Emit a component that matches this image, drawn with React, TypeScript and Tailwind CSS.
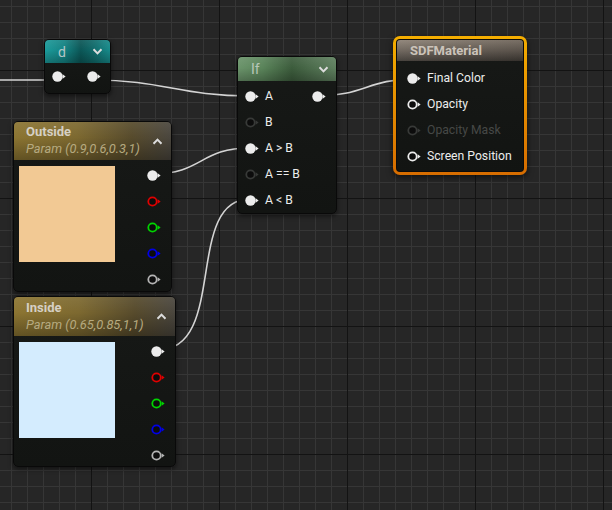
import React from 'react';

type PinKind = 'filled' | 'ring' | 'dim';

function Pin({ kind = 'filled', color = '#ececec' }: { kind?: PinKind; color?: string }) {
  const c = kind === 'dim' ? '#383a38' : color;
  return (
    <svg width="14" height="11" viewBox="0 0 14 11" className="shrink-0">
      {kind === 'filled' ? (
        <circle cx="5.5" cy="5.5" r="5.2" fill={c} />
      ) : (
        <circle cx="5.5" cy="5.5" r="4.2" fill="#0c0c0c" stroke={c} strokeWidth="1.8" />
      )}
      <polygon points="10.6,3.3 13.6,5.5 10.6,7.7" fill={c} />
    </svg>
  );
}

function Chevron({ up = false }: { up?: boolean }) {
  return (
    <svg width="11" height="7" viewBox="0 0 11 7" className="shrink-0">
      <polyline
        points={up ? '1.5,5.8 5.5,1.6 9.5,5.8' : '1.5,1.2 5.5,5.4 9.5,1.2'}
        fill="none"
        stroke="#dcdcdc"
        strokeWidth="2"
      />
    </svg>
  );
}

const font = "font-['Roboto','Liberation_Sans',sans-serif]";
const body = 'bg-[linear-gradient(180deg,#171917,#121412)]';

function Row({ pin, label, dimLabel }: { pin: PinKind; label: string; dimLabel?: boolean }) {
  return (
    <div className="flex h-[26px] items-center gap-[6px]">
      <Pin kind={pin} />
      <span className={`text-[12.2px] leading-none ${dimLabel ? 'text-[#464846]' : 'text-[#ececec]'}`}>{label}</span>
    </div>
  );
}

function ParamNode({
  title,
  param,
  swatch,
  className,
  headerH,
}: {
  title: string;
  param: string;
  swatch: string;
  className: string;
  headerH: string;
}) {
  return (
    <div
      className={`absolute flex flex-col overflow-hidden rounded-[5px] border border-[#090909] ${body} shadow-[0_2px_5px_rgba(0,0,0,0.55)] ${className}`}
    >
      <div
        className={`relative ${headerH} shrink-0 bg-[linear-gradient(90deg,#8c7532_0%,#7d6930_40%,#574b2c_75%,#4a463e_100%)]`}
      >
        <div className="absolute inset-0 bg-[linear-gradient(180deg,rgba(255,255,255,0.07)_0%,rgba(0,0,0,0)_40%,rgba(0,0,0,0.3)_100%)]" />
        <div className="relative flex h-full items-center justify-between pl-[12px] pr-[8px]">
          <div className="flex flex-col gap-[2px] pb-[2px]">
            <span className="text-[13px] font-bold leading-[15px] text-[#d6d0c4]">{title}</span>
            <span className="text-[12.8px] italic leading-[15px] text-[#b6aa80]">{param}</span>
          </div>
          <Chevron up />
        </div>
      </div>
      <div className="flex flex-1 justify-between pr-[10px]">
        <div className={`ml-[5px] mt-[6px] h-[96px] w-[96px] ${swatch}`} />
        <div className="flex flex-col pt-[2px]">
          <div className="flex h-[26px] items-center">
            <Pin kind="filled" />
          </div>
          <div className="flex h-[26px] items-center">
            <Pin kind="ring" color="#e00000" />
          </div>
          <div className="flex h-[26px] items-center">
            <Pin kind="ring" color="#00d400" />
          </div>
          <div className="flex h-[26px] items-center">
            <Pin kind="ring" color="#0000e6" />
          </div>
          <div className="flex h-[26px] items-center">
            <Pin kind="ring" color="#b4b4b4" />
          </div>
        </div>
      </div>
    </div>
  );
}

export default function App() {
  const minorX = Array.from({ length: 39 }, (_, i) => 11 + i * 16);
  const minorY = Array.from({ length: 33 }, (_, i) => 6 + i * 16);
  const majorX = [91, 219, 347, 475, 603];
  const majorY = [70, 198, 326, 454];

  return (
    <div className={`relative h-[510px] w-[612px] overflow-hidden bg-[#262626] ${font}`}>
      {/* graph grid */}
      <svg className="absolute inset-0" width="612" height="510">
        {minorX.map((x) => (
          <rect key={'x' + x} x={x} y={0} width={1} height={510} fill="#363636" />
        ))}
        {minorY.map((y) => (
          <rect key={'y' + y} x={0} y={y} width={612} height={1} fill="#363636" />
        ))}
        {majorX.map((x) => (
          <rect key={'X' + x} x={x} y={0} width={1} height={510} fill="#131313" />
        ))}
        {majorY.map((y) => (
          <rect key={'Y' + y} x={0} y={y} width={612} height={1} fill="#131313" />
        ))}
      </svg>

      {/* wires */}
      <svg className="absolute inset-0" width="612" height="510" fill="none" stroke="#d4d4d4" strokeWidth="1.6">
        <path d="M0 80 L58 80" />
        <path d="M93 80 C163 80 180 96 250 96" />
        <path d="M318 96 C362 96 370 79 413 79" />
        <path d="M153 174 C202 174 200 148 250 148" />
        <path d="M158 350 C228 350 184 199 250 199" />
      </svg>

      {/* d */}
      <div
        className={`absolute left-[44px] top-[39px] flex h-[55px] w-[67px] flex-col overflow-hidden rounded-[5px] border border-[#090909] ${body} shadow-[0_2px_5px_rgba(0,0,0,0.55)]`}
      >
        <div className="relative h-[23px] shrink-0 bg-[linear-gradient(90deg,#1c9a9a_0%,#148282_30%,#0b5656_55%,#106a6a_75%,#178a8a_100%)]">
          <div className="absolute inset-0 bg-[linear-gradient(180deg,rgba(255,255,255,0.08)_0%,rgba(0,0,0,0)_45%,rgba(0,0,0,0.25)_100%)]" />
          <div className="relative flex h-full items-center justify-between pl-[13px] pr-[7px]">
            <span className="text-[14px] leading-none text-[#b4c6c6]">d</span>
            <Chevron />
          </div>
        </div>
        <div className="flex flex-1 items-center justify-between pb-[4px] pl-[7px] pr-[9px]">
          <Pin kind="filled" />
          <Pin kind="filled" />
        </div>
      </div>

      {/* If */}
      <div
        className={`absolute left-[237px] top-[56px] flex h-[158px] w-[100px] flex-col overflow-hidden rounded-[5px] border border-[#090909] ${body} shadow-[0_2px_5px_rgba(0,0,0,0.55)]`}
      >
        <div className="relative h-[24px] shrink-0 bg-[linear-gradient(90deg,#6b946b_0%,#5a845a_25%,#3c5c3c_55%,#4c6c4c_75%,#5f805f_100%)]">
          <div className="absolute inset-0 bg-[linear-gradient(180deg,rgba(255,255,255,0.08)_0%,rgba(0,0,0,0)_45%,rgba(0,0,0,0.25)_100%)]" />
          <div className="relative flex h-full items-center justify-between pl-[13px] pr-[7px]">
            <span className="text-[14px] leading-none text-[#b8c6b8]">If</span>
            <Chevron />
          </div>
        </div>
        <div className="flex flex-1 justify-between pl-[7px] pr-[10px] pt-[2px]">
          <div className="flex flex-col">
            <Row pin="filled" label="A" />
            <Row pin="dim" label="B" />
            <Row pin="filled" label="A > B" />
            <Row pin="dim" label="A == B" />
            <Row pin="filled" label="A < B" />
          </div>
          <div className="flex h-[26px] items-center">
            <Pin kind="filled" />
          </div>
        </div>
      </div>

      {/* SDFMaterial (selected) */}
      <div className="absolute left-[393px] top-[36px] h-[139px] w-[134px] rounded-[7px] bg-[linear-gradient(180deg,#f4ae00,#d66c00)] p-[3px] shadow-[0_2px_6px_rgba(0,0,0,0.6)]">
        <div className="flex h-full flex-col overflow-hidden rounded-[4px] bg-[#0b0b0b] p-[1px]">
          <div className={`flex flex-1 flex-col overflow-hidden rounded-[3px] ${body}`}>
            <div className="relative h-[21px] shrink-0 bg-[linear-gradient(180deg,#8e8377_0%,#6a6158_50%,#3e3934_100%)]">
              <div className="absolute inset-0 bg-[linear-gradient(90deg,rgba(255,255,255,0.05),rgba(0,0,0,0.15))]" />
              <div className="relative flex h-full items-center pl-[13px]">
                <span className="text-[13px] font-bold leading-none text-[#cbc3ba]">SDFMaterial</span>
              </div>
            </div>
            <div className="flex flex-col pl-[10px] pt-[4px]">
              <Row pin="filled" label="Final Color" />
              <Row pin="ring" label="Opacity" />
              <Row pin="dim" label="Opacity Mask" dimLabel />
              <Row pin="ring" label="Screen Position" />
            </div>
          </div>
        </div>
      </div>

      <ParamNode
        title="Outside"
        param="Param (0.9,0.6,0.3,1)"
        swatch="bg-[#f2c994]"
        className="left-[13px] top-[121px] h-[171px] w-[159px]"
        headerH="h-[38px]"
      />
      <ParamNode
        title="Inside"
        param="Param (0.65,0.85,1,1)"
        swatch="bg-[#d4ecfe]"
        className="left-[13px] top-[296px] h-[171px] w-[163px]"
        headerH="h-[39px]"
      />
    </div>
  );
}
